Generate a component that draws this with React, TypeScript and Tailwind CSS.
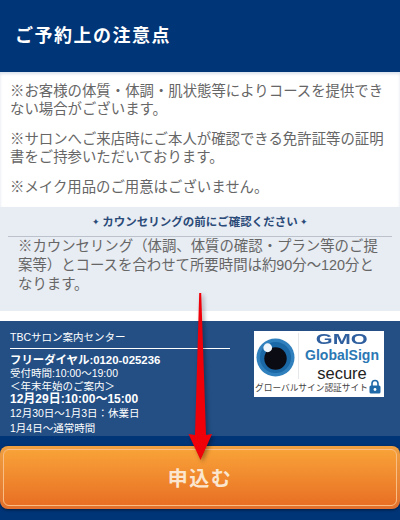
import React from 'react';

const font = { fontFamily: '"Liberation Sans", "Noto Sans CJK JP", sans-serif' };

const Badge: React.FC = () => (
  <div className="w-[130px] h-[66px] bg-white flex flex-col shrink-0 mt-[10px]">
    <div className="flex h-[50px] pt-[2px]">
      <div className="w-[44px] pl-[2px] flex items-center">
        <svg width="39" height="39" viewBox="0 0 40 40">
          <circle cx="20" cy="20" r="19.5" fill="#2f80bd" />
          <circle cx="20" cy="20" r="16" fill="#1b68a6" />
          <circle cx="20" cy="21" r="11.5" fill="#0b0b14" />
          <circle cx="12" cy="10" r="4.5" fill="#eef5fb" />
        </svg>
      </div>
      <div className="w-px h-[46px] bg-gray-200" />
      <div className="flex-1 flex flex-col items-center leading-none pl-[1px] -mt-[1px]" style={{ fontFamily: '"Liberation Sans", sans-serif' }}>
        <span className="text-[#2f5f9e] text-[14px] font-bold leading-[14px] scale-x-[1.55]">GMO</span>
        <span className="text-[#2b78b4] text-[14px] font-bold leading-[18px]">GlobalSign</span>
        <span className="text-[#222] text-[16.5px] leading-[18px]">secure</span>
      </div>
    </div>
    <div className="flex items-center pl-[1px] pt-[1px] text-[8.7px] leading-none text-[#444] whitespace-nowrap">
      <span>グローバルサイン認証サイト</span>
      <svg width="12" height="15" viewBox="0 0 12 15" className="-mt-[3px] ml-px shrink-0">
        <path d="M3 7V4.5a3 3 0 0 1 6 0V7" fill="none" stroke="#1f69a8" strokeWidth="1.6" />
        <rect x="0.5" y="6.5" width="11" height="8" rx="1.5" fill="#1f69a8" />
        <circle cx="6" cy="10.5" r="1.4" fill="#fff" />
      </svg>
    </div>
  </div>
);

const App: React.FC = () => {
  return (
    <div className="relative w-[400px] h-[520px] overflow-hidden bg-[#003578]" style={font}>
      <header className="h-[72px] bg-[#003578] flex items-center pl-[15px]">
        <h1 className="text-white text-[18px] font-bold tracking-[1.5px]">ご予約上の注意点</h1>
      </header>

      <section className="h-[135px] bg-white px-[10px] pt-[10px] text-[14.4px] leading-[18px] text-[#666] flex flex-col gap-[12px] shadow-[inset_0_2px_3px_rgba(0,53,120,0.15)]">
        <p>※お客様の体質・体調・肌状態等によりコースを提供できない場合がございます。</p>
        <p>※サロンへご来店時にご本人が確認できる免許証等の証明書をご持参いただいております。</p>
        <p>※メイク用品のご用意はございません。</p>
      </section>

      <section className="h-[104px] bg-[#e8ecf3]">
        <div className="mx-2 h-[30px] border-b border-[#bcc2cc] flex items-center justify-center gap-[2px] pt-[2px] text-[#2a4a78]">
          <span className="text-[9px]">✦</span>
          <span className="text-[11.5px] font-bold">カウンセリングの前にご確認ください</span>
          <span className="text-[9px]">✦</span>
        </div>
        <p className="pl-[18px] pr-[20px] text-[14.4px] leading-[19px] text-[#666]">
          ※カウンセリング（体調、体質の確認・プラン等のご提案等）とコースを合わせて所要時間は約90分～120分となります。
        </p>
      </section>

      <div className="h-[10px] bg-white" />

      <footer className="h-[115px] bg-[#234f85] flex justify-between pl-[10px] pr-4 text-white text-[10.5px] leading-[13px]">
        <div className="w-[220px]">
          <div className="h-[28px] pt-[10px] border-b border-white">TBCサロン案内センター</div>
          <div className="pt-[5px]">
            <p className="font-bold text-[11.4px]">フリーダイヤル:0120-025236</p>
            <p>受付時間:10:00～19:00</p>
            <p>＜年末年始のご案内＞</p>
            <p className="font-bold text-[12px]">12月29日:10:00～15:00</p>
            <p className="leading-[14px]">12月30日～1月3日：休業日</p>
            <p className="leading-[16px]">1月4日～通常時間</p>
          </div>
        </div>
        <Badge />
      </footer>

      <div className="pt-[10px]">
        <button className="block w-[400px] h-[63px] p-[3px] rounded-[8px] bg-gradient-to-b from-[#f0a040] to-[#e2702c] shadow-[0_1px_3px_rgba(0,0,0,0.5)]">
          <span className="flex items-center justify-center h-full pt-[3px] rounded-[6px] border-[1.5px] border-[#f8bd84] bg-gradient-to-b from-[#f8a238] to-[#e86f24] text-[#fbe6cf] text-[20px] font-bold tracking-[1.5px]">
            申込む
          </span>
        </button>
      </div>

      <svg className="absolute left-[186px] top-[292px] drop-shadow-[2px_2px_2px_rgba(0,0,0,0.35)]" width="28" height="170" viewBox="0 0 28 170">
        <path d="M13.2 1 L15.2 1 L20 143 L26 142 L14.5 168 L2.5 142 L9 143 Z" fill="#f00008" />
      </svg>
    </div>
  );
};

export default App;
